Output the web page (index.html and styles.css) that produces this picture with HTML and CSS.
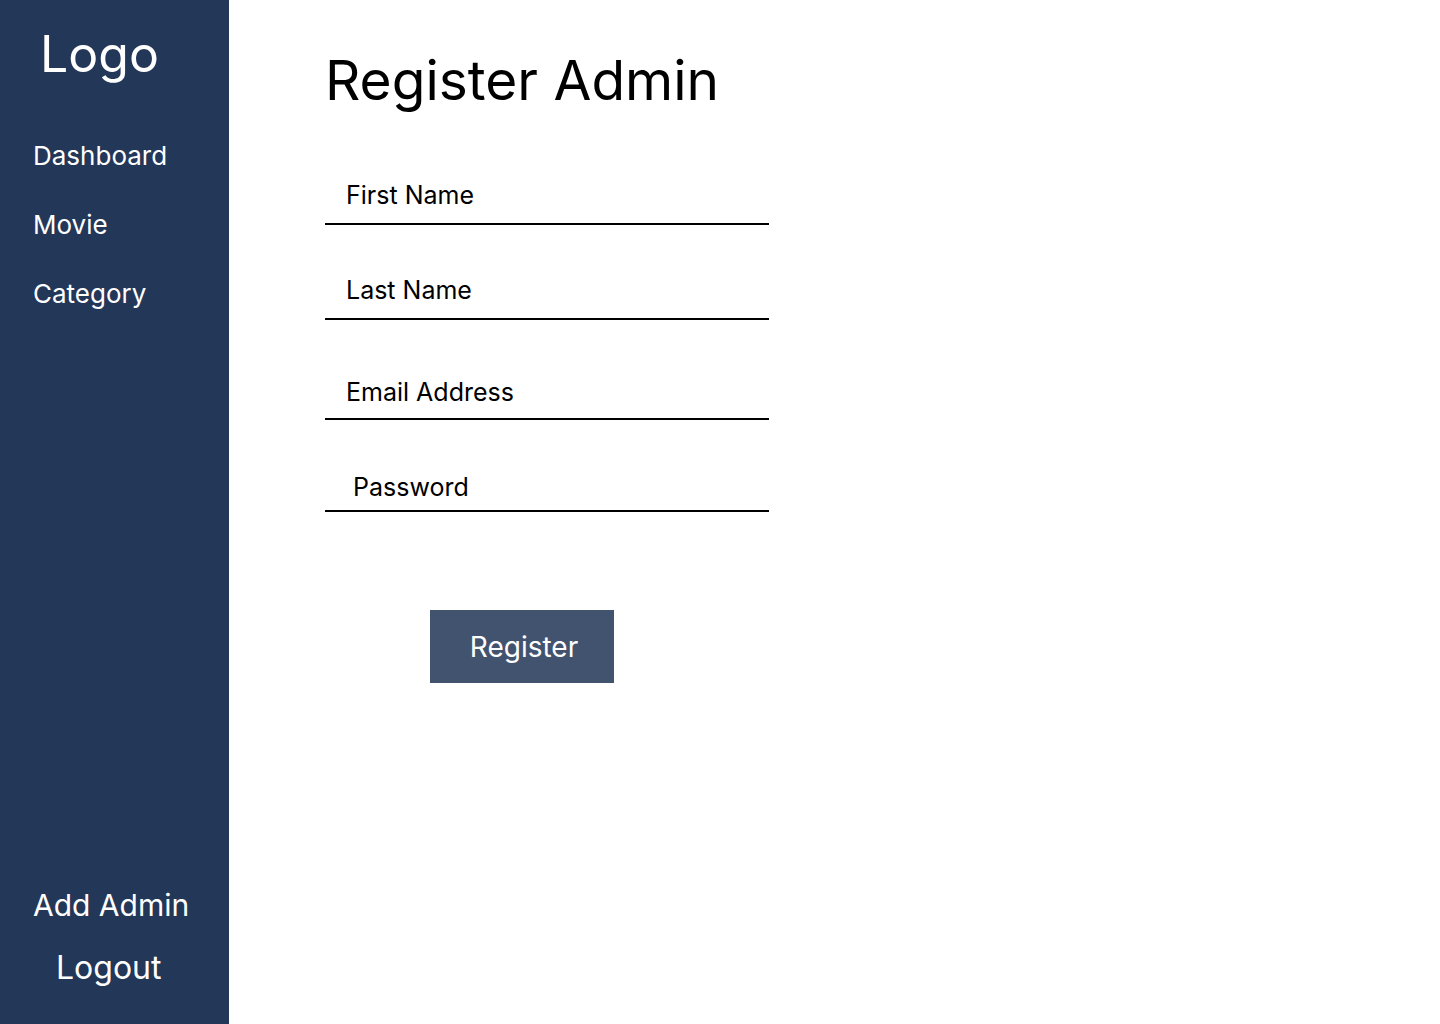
FILE: index.html
```html
<!DOCTYPE html>
<html lang="en">
<head>
<meta charset="utf-8">
<title>Register Admin</title>
<link rel="stylesheet" href="styles.css">
</head>
<body>
<div class="app">
  <aside class="sidebar">
    <div class="logo">Logo</div>
    <nav class="nav">
      <a class="nav-item" href="#">Dashboard</a>
      <a class="nav-item" href="#">Movie</a>
      <a class="nav-item" href="#">Category</a>
    </nav>
    <div class="sidebar-bottom">
      <a class="bottom-item" href="#">Add Admin</a>
      <a class="bottom-item bottom-item--logout" href="#">Logout</a>
    </div>
  </aside>
  <main class="main">
    <h1 class="title">Register Admin</h1>
    <form class="form">
      <div class="field field--first"><span class="field-label">First Name</span></div>
      <div class="field field--second"><span class="field-label">Last Name</span></div>
      <div class="field field--third"><span class="field-label">Email Address</span></div>
      <div class="field field--fourth"><span class="field-label field-label--password">Password</span></div>
      <button class="btn" type="button">Register</button>
    </form>
  </main>
</div>
</body>
</html>
```

FILE: styles.css
```css
* { box-sizing: border-box; }
html, body { margin: 0; padding: 0; }
body {
  font-family: Inter, "Noto Sans", "Liberation Sans", sans-serif;
  background: #ffffff;
  color: #000000;
}
.app {
  display: flex;
  height: 1024px;
}
.sidebar {
  width: 229px;
  flex-shrink: 0;
  background: #233759;
  color: #ffffff;
  display: flex;
  flex-direction: column;
  padding-top: 24px;
  padding-bottom: 37px;
}
.logo {
  font-size: 50px;
  line-height: 60px;
  padding-left: 40px;
}
.nav {
  display: flex;
  flex-direction: column;
  gap: 38px;
  margin-top: 56px;
  padding-left: 33px;
}
.nav-item {
  color: #ffffff;
  text-decoration: none;
  font-size: 26px;
  line-height: 31px;
}
.sidebar-bottom {
  margin-top: auto;
  display: flex;
  flex-direction: column;
  gap: 25px;
}
.bottom-item {
  color: #ffffff;
  text-decoration: none;
  font-size: 30px;
  line-height: 36px;
  padding-left: 33px;
}
.bottom-item--logout {
  padding-left: 56px;
  font-size: 32px;
  line-height: 39px;
}
.main {
  flex: 1;
  padding-left: 96px;
  padding-top: 46px;
}
.title {
  margin: 0;
  font-size: 55px;
  line-height: 68px;
  font-weight: 400;
}
.form {
  display: flex;
  flex-direction: column;
  align-items: flex-start;
  margin-top: 67px;
}
.field {
  width: 444px;
  border-bottom: 2px solid #000000;
  padding-bottom: 13px;
}
.field--second { margin-top: 51px; }
.field--third { margin-top: 58px; padding-bottom: 11px; }
.field--fourth { margin-top: 53px; padding-bottom: 8px; }
.field-label {
  display: block;
  font-size: 25px;
  line-height: 29px;
  padding-left: 21px;
}
.field-label--password { padding-left: 28px; }
.btn {
  margin-top: 98px;
  margin-left: 105px;
  width: 184px;
  height: 73px;
  border: none;
  background: #42536f;
  color: #ffffff;
  font-family: inherit;
  font-size: 28px;
  padding: 0 0 0 4px;
  cursor: pointer;
}
```
